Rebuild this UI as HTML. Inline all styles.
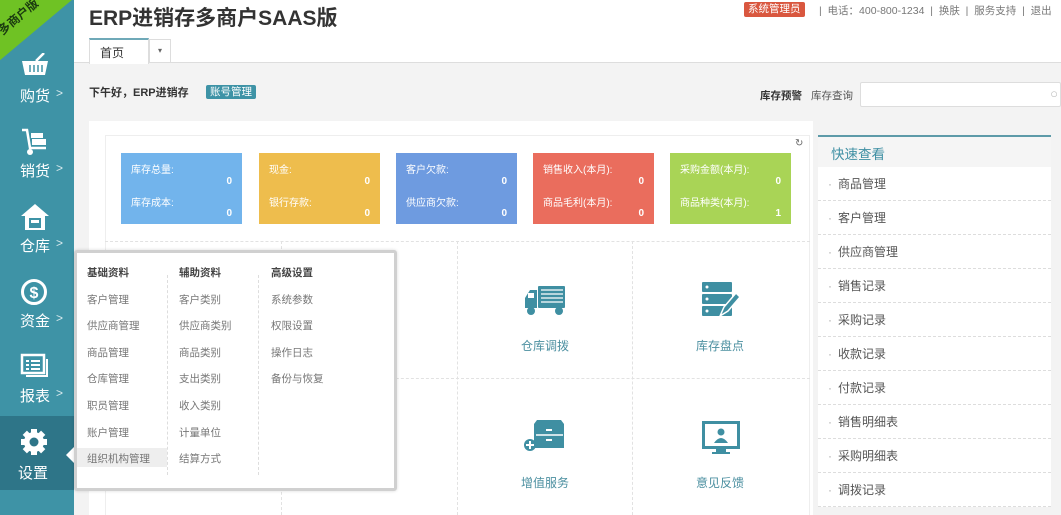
<!DOCTYPE html>
<html><head><meta charset="utf-8"><style>
*{margin:0;padding:0;box-sizing:border-box}
body{width:1061px;height:515px;overflow:hidden;position:relative;background:#f3f3f3;font-family:"Liberation Sans","Noto Sans CJK SC",sans-serif;color:#555}
.abs{position:absolute}
#side{left:0;top:0;width:74px;height:515px;background:#3e93a6;overflow:hidden}
.nav{position:absolute;left:0;width:74px;height:75px;color:#fff;font-size:15px}
.nav .t{position:absolute;left:20px;top:44px}
.nav .ar{position:absolute;left:56px;top:45px;font-size:12px;opacity:.8}
.nav svg{position:absolute;left:20px;top:12px}
#hdr{left:74px;top:0;width:987px;height:63px;background:#fff;border-bottom:1px solid #ddd}
.card{position:absolute;top:153px;width:121px;height:71px;color:#fff;font-size:10px}
.card .a{position:absolute;left:10px;top:8px}
.card .b{position:absolute;left:10px;top:41px}
.card .n1{position:absolute;right:10px;top:23px;font-weight:bold}
.card .n2{position:absolute;right:10px;top:55px;font-weight:bold}
.dl{position:absolute;border-color:#e2e2e2;border-style:dashed;border-width:0}
.gl{position:absolute;font-size:12px;color:#4b8fa0;text-align:center;width:100px}
.qi{position:absolute;left:818px;width:233px;height:34px;border-bottom:1px dashed #ddd;font-size:12px;color:#555;line-height:34px;padding-left:10px;background:#fff}
.qi:before{content:"·";color:#aaa;margin-right:6px}
#dd{left:74px;top:250px;width:323px;height:241px;background:#fff;border:3px solid #d0d0d0;border-radius:3px;box-shadow:0 0 3px rgba(0,0,0,.15)}
.col{position:absolute;top:7px;font-size:10.5px;color:#777}
.col div{height:26.6px;line-height:26.6px}
.col .h{font-weight:bold;color:#444}
</style></head><body>
<div id="side" class="abs">
 <div class="abs" style="left:-32px;top:-28px;width:104px;height:62px;background:#6fc224;transform:rotate(-40deg);transform-origin:50% 50%"></div>
 <div class="abs" style="left:-6px;top:8px;font-size:12px;font-weight:bold;color:#1a3a10;transform:rotate(-40deg);white-space:nowrap">多商户版</div>
 <div class="nav" style="top:41px"><svg width="30" height="26" viewBox="0 0 30 26"><path d="M2 8h26l-3 14H5z" fill="#fff"/><path d="M16 8l8-8" stroke="#fff" stroke-width="2.5"/><path d="M10 12v7M14 12v7M18 12v7M22 12v7" stroke="#3e93a6" stroke-width="1.5"/></svg><span class="t">购货</span><span class="ar">&gt;</span></div>
 <div class="nav" style="top:116px"><svg width="30" height="28" viewBox="0 0 30 28"><path d="M2 2h5l3 18h16" stroke="#fff" stroke-width="2.5" fill="none"/><rect x="11" y="5" width="12" height="5" fill="#fff"/><rect x="12" y="11" width="14" height="6" fill="#fff"/><circle cx="10" cy="24" r="3" fill="#fff"/></svg><span class="t">销货</span><span class="ar">&gt;</span></div>
 <div class="nav" style="top:191px"><svg width="30" height="28" viewBox="0 0 30 28"><path d="M15 1L1 13h4v14h20V13h4z" fill="#fff"/><rect x="9" y="15" width="12" height="10" fill="#3e93a6"/><rect x="11" y="17" width="8" height="3" fill="#fff"/></svg><span class="t">仓库</span><span class="ar">&gt;</span></div>
 <div class="nav" style="top:266px"><svg width="28" height="28" viewBox="0 0 28 28"><circle cx="14" cy="14" r="11.5" stroke="#fff" stroke-width="3" fill="none"/><text x="14" y="20" font-size="16" font-weight="bold" fill="#fff" text-anchor="middle" font-family="Liberation Sans">$</text></svg><span class="t">资金</span><span class="ar">&gt;</span></div>
 <div class="nav" style="top:341px"><svg width="30" height="28" viewBox="0 0 30 28"><rect x="2" y="2" width="22" height="18" stroke="#fff" stroke-width="2.5" fill="none"/><path d="M6 8h3M11 8h9M6 12h3M11 12h9M6 16h3M11 16h9" stroke="#fff" stroke-width="2"/><path d="M27 6v17H6" stroke="#fff" stroke-width="2" fill="none"/></svg><span class="t">报表</span><span class="ar">&gt;</span></div>
 <div class="nav" style="top:416px;height:74px;background:#2e7588"><svg width="28" height="28" viewBox="0 0 28 28"><g fill="#fff"><circle cx="14" cy="14" r="10"/><rect x="11" y="1" width="6" height="26"/><rect x="1" y="11" width="26" height="6"/><rect x="11" y="1" width="6" height="26" transform="rotate(45 14 14)"/><rect x="11" y="1" width="6" height="26" transform="rotate(-45 14 14)"/></g><circle cx="14" cy="14" r="4.5" fill="#2e7588"/></svg><span class="t" style="left:18px;top:46px">设置</span></div>
</div>
<div class="abs" style="left:66px;top:447px;width:0;height:0;border:8px solid transparent;border-right-color:#fff;border-left:0"></div>
<div id="hdr" class="abs">
 <div class="abs" style="left:15px;top:2px;font-size:21px;font-weight:bold;color:#333">ERP进销存多商户SAAS版</div>
 <div class="abs" style="left:15px;top:38px;width:60px;height:26px;border:1px solid #ddd;border-top:2px solid #6fa9b8;border-bottom:0;background:#fff;font-size:12px;color:#333;padding:4px 0 0 10px">首页</div>
 <div class="abs" style="left:75px;top:39px;width:22px;height:24px;border:1px solid #ddd;border-bottom:0;font-size:8px;color:#666;text-align:center;line-height:22px">▾</div>
 <div class="abs" style="left:670px;top:2px;height:15px;padding:0 4px;background:#d9573f;color:#fff;font-size:10.5px;line-height:15px;border-radius:2px">系统管理员</div>
 <div class="abs" style="left:745px;top:3px;font-size:10.5px;color:#777;white-space:nowrap">| &nbsp;电话：400-800-1234 &nbsp;| &nbsp;换肤 &nbsp;| &nbsp;服务支持 &nbsp;| &nbsp;退出</div>
</div>
<div class="abs" style="left:89px;top:84px;font-size:11px;font-weight:bold;color:#333">下午好，ERP进销存</div>
<div class="abs" style="left:206px;top:85px;height:14px;padding:0 4px;background:#3e93a6;color:#fff;font-size:10.5px;line-height:14px;border-radius:2px">账号管理</div>
<div class="abs" style="left:760px;top:88px;font-size:10.5px;color:#333;font-weight:bold">库存预警</div>
<div class="abs" style="left:811px;top:88px;font-size:10.5px;color:#555">库存查询</div>
<div class="abs" style="left:860px;top:82px;width:201px;height:25px;background:#fff;border:1px solid #ddd;border-radius:2px"><span class="abs" style="right:2px;top:3px;color:#bbb;font-size:13px">○</span></div>
<div class="abs" style="left:89px;top:121px;width:724px;height:394px;background:#fff"></div>
<div class="abs" style="left:105px;top:135px;width:705px;height:380px;border:1px solid #eee;border-bottom:0"></div>
<div class="abs" style="left:795px;top:138px;font-size:10px;color:#666">↻</div>
<div class="card" style="left:121px;background:#72b4ec"><span class="a">库存总量:</span><span class="n1">0</span><span class="b">库存成本:</span><span class="n2">0</span></div>
<div class="card" style="left:259px;background:#eebd4d"><span class="a">现金:</span><span class="n1">0</span><span class="b">银行存款:</span><span class="n2">0</span></div>
<div class="card" style="left:396px;background:#6e9be0"><span class="a">客户欠款:</span><span class="n1">0</span><span class="b">供应商欠款:</span><span class="n2">0</span></div>
<div class="card" style="left:533px;background:#ea6d5d"><span class="a">销售收入(本月):</span><span class="n1">0</span><span class="b">商品毛利(本月):</span><span class="n2">0</span></div>
<div class="card" style="left:670px;background:#a9d456"><span class="a">采购金额(本月):</span><span class="n1">0</span><span class="b">商品种类(本月):</span><span class="n2">1</span></div>
<div class="dl" style="left:105px;top:241px;width:705px;border-top-width:1px"></div>
<div class="dl" style="left:105px;top:378px;width:705px;border-top-width:1px"></div>
<div class="dl" style="left:281px;top:241px;height:274px;border-left-width:1px"></div>
<div class="dl" style="left:457px;top:241px;height:274px;border-left-width:1px"></div>
<div class="dl" style="left:632px;top:241px;height:274px;border-left-width:1px"></div>
<svg class="abs" style="left:524px;top:286px" width="42" height="30" viewBox="0 0 42 30"><g fill="#3f8fa2"><rect x="14" y="0" width="27" height="22" rx="1"/><path d="M1 12l5-8h7v18H1z"/><circle cx="7" cy="25" r="4"/><circle cx="35" cy="25" r="4"/></g><path d="M17 4h22M17 8h22M17 12h22M17 16h22" stroke="#fff" stroke-width="1.2"/><rect x="4" y="7" width="6" height="5" fill="#fff"/></svg>
<div class="gl" style="left:495px;top:337px">仓库调拨</div>
<svg class="abs" style="left:702px;top:282px" width="40" height="36" viewBox="0 0 40 36"><g fill="#3f8fa2"><rect x="0" y="0" width="30" height="10" rx="1"/><rect x="0" y="12" width="30" height="10" rx="1"/><rect x="0" y="24" width="30" height="10" rx="1"/></g><g fill="#fff"><circle cx="5" cy="5" r="1.5"/><circle cx="5" cy="17" r="1.5"/><circle cx="5" cy="29" r="1.5"/></g><path d="M18 34l4-9 12-14 4 4-12 14z" fill="#3f8fa2" stroke="#fff" stroke-width="1.5"/></svg>
<div class="gl" style="left:670px;top:337px">库存盘点</div>
<svg class="abs" style="left:524px;top:420px" width="42" height="32" viewBox="0 0 42 32"><g fill="#3f8fa2"><path d="M10 4l3-4h24l3 4v24H10z"/><circle cx="6" cy="25" r="6"/></g><path d="M12 15h27" stroke="#fff" stroke-width="1.5"/><path d="M22 10h6M22 20h6" stroke="#fff" stroke-width="2"/><path d="M6 21v8M2 25h8" stroke="#fff" stroke-width="2"/></svg>
<div class="gl" style="left:495px;top:474px">增值服务</div>
<svg class="abs" style="left:702px;top:421px" width="38" height="33" viewBox="0 0 38 33"><rect x="1.5" y="1.5" width="35" height="25" fill="none" stroke="#3f8fa2" stroke-width="3"/><circle cx="19" cy="11" r="3.5" fill="#3f8fa2"/><path d="M12 22q7-10 14 0z" fill="#3f8fa2"/><path d="M14 28h10v3H14z" fill="#3f8fa2"/><path d="M10 32h18" stroke="#3f8fa2" stroke-width="2"/></svg>
<div class="gl" style="left:670px;top:474px">意见反馈</div>
<div class="abs" style="left:818px;top:135px;width:233px;height:32px;background:#f5f5f5;border-top:2px solid #5d9aa8;font-size:13.5px;color:#3e8fa3;padding:6px 0 0 13px">快速查看</div>
<div class="qi" style="top:167px">商品管理</div>
<div class="qi" style="top:201px">客户管理</div>
<div class="qi" style="top:235px">供应商管理</div>
<div class="qi" style="top:269px">销售记录</div>
<div class="qi" style="top:303px">采购记录</div>
<div class="qi" style="top:337px">收款记录</div>
<div class="qi" style="top:371px">付款记录</div>
<div class="qi" style="top:405px">销售明细表</div>
<div class="qi" style="top:439px">采购明细表</div>
<div class="qi" style="top:473px">调拨记录</div>
<div id="dd" class="abs">
 <div class="abs" style="left:0;top:195px;width:90px;height:19px;background:#eee"></div>
 <div class="col" style="left:10px"><div class="h">基础资料</div><div>客户管理</div><div>供应商管理</div><div>商品管理</div><div>仓库管理</div><div>职员管理</div><div>账户管理</div><div>组织机构管理</div></div>
 <div class="abs" style="left:90px;top:22px;height:200px;border-left:1px dashed #ddd"></div>
 <div class="col" style="left:102px"><div class="h">辅助资料</div><div>客户类别</div><div>供应商类别</div><div>商品类别</div><div>支出类别</div><div>收入类别</div><div>计量单位</div><div>结算方式</div></div>
 <div class="abs" style="left:181px;top:22px;height:200px;border-left:1px dashed #ddd"></div>
 <div class="col" style="left:194px"><div class="h">高级设置</div><div>系统参数</div><div>权限设置</div><div>操作日志</div><div>备份与恢复</div></div>
</div>
</body></html>
